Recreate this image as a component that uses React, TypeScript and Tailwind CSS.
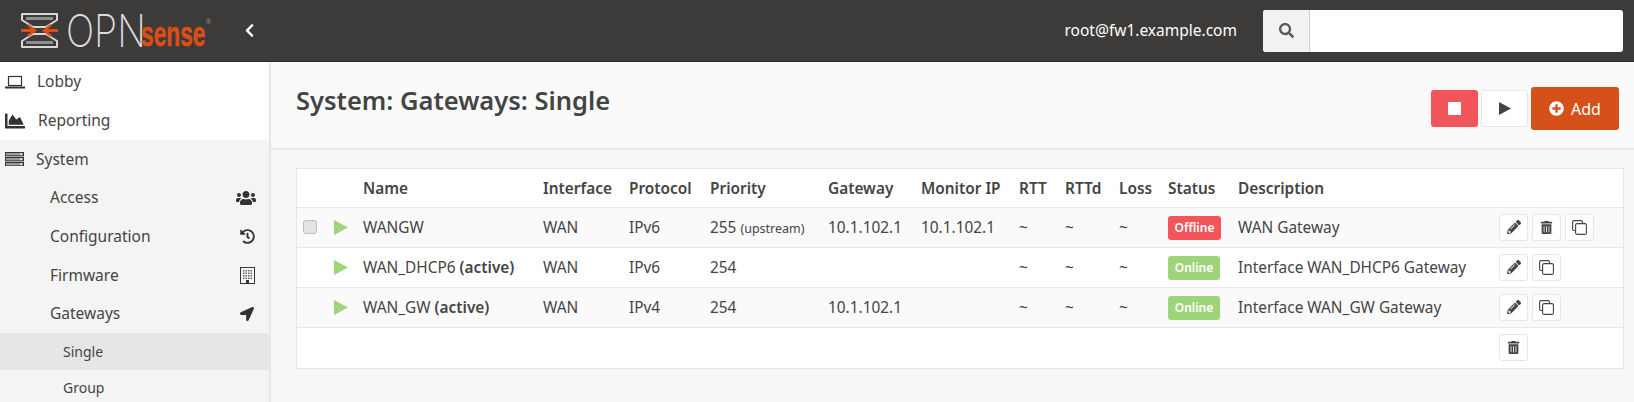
import React from 'react';
import {
  FaChartArea,
  FaChevronLeft,
  FaHistory,
  FaLocationArrow,
  FaPencilAlt,
  FaPlusCircle,
  FaSearch,
  FaTrashAlt,
  FaUsers,
} from 'react-icons/fa';

type Row = {
  name: string;
  active?: boolean;
  iface: string;
  proto: string;
  priority: string;
  upstream?: boolean;
  gateway: string;
  monitor: string;
  online: boolean;
  description: string;
  removable?: boolean;
  check?: boolean;
};

const rows: Row[] = [
  { name: 'WANGW', iface: 'WAN', proto: 'IPv6', priority: '255', upstream: true, gateway: '10.1.102.1', monitor: '10.1.102.1', online: false, description: 'WAN Gateway', removable: true, check: true },
  { name: 'WAN_DHCP6', active: true, iface: 'WAN', proto: 'IPv6', priority: '254', gateway: '', monitor: '', online: true, description: 'Interface WAN_DHCP6 Gateway' },
  { name: 'WAN_GW', active: true, iface: 'WAN', proto: 'IPv4', priority: '254', gateway: '10.1.102.1', monitor: '', online: true, description: 'Interface WAN_GW Gateway' },
];

const headers = ['', '', 'Name', 'Interface', 'Protocol', 'Priority', 'Gateway', 'Monitor IP', 'RTT', 'RTTd', 'Loss', 'Status', 'Description', ''];
const colWidths = ['w-[37px]', 'w-[29px]', 'w-[180px]', 'w-[86px]', 'w-[81px]', 'w-[118px]', 'w-[93px]', 'w-[98px]', 'w-[46px]', 'w-[54px]', 'w-[49px]', 'w-[70px]', 'w-[261px]', 'w-[124px]'];

// text cells sit a touch lower than the badges and buttons
const cell = 'pt-[2px] whitespace-nowrap';

function Triangle({ className }: { className: string }) {
  return (
    <svg viewBox="0 0 14 15" className={className} fill="currentColor">
      <path d="M0 0L14 7.5L0 15Z" />
    </svg>
  );
}

function CloneIcon() {
  return (
    <svg width="15" height="15" viewBox="0 0 15 15" fill="none" stroke="#444" strokeWidth="1.1">
      <path d="M3.5 10.5H2A1.5 1.5 0 0 1 .6 9V2A1.5 1.5 0 0 1 2 .6H9A1.5 1.5 0 0 1 10.5 2V3.5" />
      <rect x="3.6" y="3.6" width="10.8" height="10.8" rx="1.5" />
    </svg>
  );
}

function LaptopIcon() {
  return (
    <svg width="20" height="14" viewBox="0 0 20 14" fill="none" stroke="#333" className="shrink-0">
      <rect x="3.5" y="1.5" width="13" height="9" strokeWidth="1.2" />
      <path d="M0 12.5H20" strokeWidth="2" />
    </svg>
  );
}

function ServerIcon() {
  return (
    <svg width="19" height="14" viewBox="0 0 19 14" className="shrink-0">
      {[0, 5, 10].map(y => (
        <g key={y}>
          <rect x="0.5" y={y + 0.5} width="18" height="3.4" fill="#9a9a9a" stroke="#333" />
          <rect x="15" y={y + 1.5} width="2" height="1.4" fill="#eee" />
        </g>
      ))}
    </svg>
  );
}

function BuildingIcon() {
  return (
    <svg width="15" height="17" viewBox="0 0 15 17" className="shrink-0 mr-[1px]">
      <rect x="0.5" y="0.5" width="14" height="16" fill="#f8f8f8" stroke="#333" />
      {[3, 5.5, 8, 10.5].flatMap(y =>
        [3, 5.5, 8, 10.5].map(x => <rect key={`${x}-${y}`} x={x} y={y} width="1.5" height="1.5" fill="#666" />),
      )}
      <rect x="6" y="13" width="3" height="3.5" fill="#333" />
    </svg>
  );
}

function Logo() {
  return (
    <div className="flex items-center w-[210px] h-[62px] ml-[21px] shrink-0">
      <svg width="37" height="37" viewBox="0 0 37 37" fill="none" className="shrink-0">
        <path d="M1 8V2H36V8L25 15H12L1 8Z" stroke="#d8d8d8" strokeWidth="2" strokeLinejoin="round" />
        <path d="M1 29V35H36V29L25 22H12L1 29Z" stroke="#d8d8d8" strokeWidth="2" strokeLinejoin="round" />
        <path d="M5 6.5H32M5 30.5H32" stroke="#8f8f8f" strokeWidth="3" />
        <path d="M0 18.5H12M37 18.5H25" stroke="#d94f16" strokeWidth="3" />
        <path d="M7 13L14 18.5L7 24M30 13L23 18.5L30 24" stroke="#d94f16" strokeWidth="2.5" />
      </svg>
      <span className="ml-[8px] w-[75px] text-[45px] leading-none font-extralight text-[#dcdcdc] font-['Inter',sans-serif] origin-left scale-x-[0.83]">OPN</span>
      <span className="mt-[6px] w-[65px] text-[35px] leading-none font-bold text-[#d94f16] [-webkit-text-stroke:0.6px_#d94f16] font-['Liberation_Sans',sans-serif] origin-left scale-x-[0.65] whitespace-nowrap">sense</span>
      <span className="mb-[18px] text-[7px] leading-none text-[#9a9a9a] font-['Liberation_Sans',sans-serif]">®</span>
    </div>
  );
}

function Header() {
  return (
    <header className="h-[62px] shrink-0 bg-[#3c3b39] flex items-center border-b border-[#2e2d2b]">
      <Logo />
      <FaChevronLeft className="ml-[11px] text-white text-[15px]" />
      <span className="ml-auto text-white text-[15.5px]">root@fw1.example.com</span>
      <div className="ml-[26px] mr-[11px] w-[360px] h-[42px] flex rounded-[3px] overflow-hidden bg-white">
        <div className="w-[47px] bg-[#f2f2f2] border-r border-[#cfcfcf] flex items-center justify-center">
          <FaSearch className="text-[15px] text-[#5a5a5a]" />
        </div>
      </div>
    </header>
  );
}

function NavItem({ label, icon, bg, sub, h }: { label: string; icon?: React.ReactNode; bg?: string; sub?: boolean; h: string }) {
  return (
    <div className={`flex items-center justify-between ${h} ${bg ?? ''} ${sub ? 'pl-[63px] text-[14px]' : 'pl-[50px] text-[15.5px]'} pr-[13px] text-[#444]`}>
      <span className={sub ? '' : 'pt-[1px]'}>{label}</span>
      {icon}
    </div>
  );
}

function Sidebar() {
  return (
    <aside className="w-[271px] shrink-0 bg-[#f4f4f4] border-r-2 border-[#e6e6e6] text-[#444]">
      <div className="bg-white h-[78px]">
        <div className="h-[39px] flex items-center pl-[5px] text-[15.5px]">
          <LaptopIcon />
          <span className="ml-[12px] pt-[1px]">Lobby</span>
        </div>
        <div className="h-[39px] flex items-center pl-[5px] text-[15.5px]">
          <FaChartArea className="text-[20px] text-[#333]" />
          <span className="ml-[13px]">Reporting</span>
        </div>
      </div>
      <div className="h-[38px] flex items-center pl-[5px] text-[15.5px]">
        <ServerIcon />
        <span className="ml-[12px] pt-[1px]">System</span>
      </div>
      <NavItem h="h-[39px]" label="Access" icon={<FaUsers className="text-[20px] text-[#333]" />} />
      <NavItem h="h-[39px]" label="Configuration" icon={<FaHistory className="text-[15px] mr-[1px] text-[#333]" />} />
      <NavItem h="h-[38px]" label="Firmware" icon={<BuildingIcon />} />
      <NavItem h="h-[39px]" label="Gateways" icon={<FaLocationArrow className="text-[14px] mr-[2px] text-[#333]" />} />
      <NavItem h="h-[37px]" sub bg="bg-[#e6e6e6]" label="Single" />
      <NavItem h="h-[34px]" sub label="Group" />
    </aside>
  );
}

function ActionButton({ children }: { children: React.ReactNode }) {
  return (
    <button className="w-[29px] h-[27px] flex items-center justify-center bg-white border border-[#e6e6e6] rounded-[3px] text-[#444] text-[13px]">
      {children}
    </button>
  );
}

function StatusBadge({ online }: { online: boolean }) {
  return (
    <span className={`inline-flex items-center justify-center h-[24px] rounded-[3px] text-white text-[12px] font-semibold ${online ? 'w-[52px] bg-[#9fd57a]' : 'w-[53px] bg-[#f2555a]'}`}>
      {online ? 'Online' : 'Offline'}
    </span>
  );
}

function GatewayTable() {
  return (
    <div className="mt-[18px] ml-[25px] mr-[10px] bg-white border border-[#e6e6e6]">
      <table className="w-full table-fixed border-collapse text-[15.4px] text-[#444]">
        <colgroup>
          {colWidths.map((w, i) => (
            <col key={i} className={w} />
          ))}
        </colgroup>
        <thead>
          <tr className="h-[38px]">
            {headers.map((h, i) => (
              <th key={i} className={`text-left font-semibold ${cell}`}>{h}</th>
            ))}
          </tr>
        </thead>
        <tbody>
          {rows.map(r => (
            <tr key={r.name} className="h-[40px] border-t border-[#e8e8e8] even:bg-white odd:bg-[#fafafa]">
              <td>
                {r.check && <div className="ml-[6px] w-[14px] h-[14px] rounded-[3px] border border-[#bbb] bg-[#e4e4e4]" />}
              </td>
              <td>
                <Triangle className="w-[14px] h-[15px] text-[#9fd57a]" />
              </td>
              <td className={cell}>
                {r.name} {r.active && <b className="font-semibold">(active)</b>}
              </td>
              <td className={cell}>{r.iface}</td>
              <td className={cell}>{r.proto}</td>
              <td className={cell}>
                {r.priority} {r.upstream && <small className="text-[12.5px]">(upstream)</small>}
              </td>
              <td className={cell}>{r.gateway}</td>
              <td className={cell}>{r.monitor}</td>
              <td className={cell}>~</td>
              <td className={cell}>~</td>
              <td className={cell}>~</td>
              <td><StatusBadge online={r.online} /></td>
              <td className={cell}>{r.description}</td>
              <td>
                <div className="flex gap-[4px]">
                  <ActionButton><FaPencilAlt className="text-[14px]" /></ActionButton>
                  {r.removable && <ActionButton><FaTrashAlt /></ActionButton>}
                  <ActionButton><CloneIcon /></ActionButton>
                </div>
              </td>
            </tr>
          ))}
          <tr className="h-[41px] border-t border-[#e8e8e8]">
            <td colSpan={13} />
            <td>
              <ActionButton><FaTrashAlt /></ActionButton>
            </td>
          </tr>
        </tbody>
      </table>
    </div>
  );
}

export default function App() {
  return (
    <div className="w-[1634px] h-[402px] overflow-hidden flex flex-col bg-[#f7f7f7] font-['Noto_Sans',sans-serif]">
      <Header />
      <div className="flex flex-1 min-h-0">
        <Sidebar />
        <main className="flex-1 min-w-0">
          <div className="h-[88px] bg-[#fafafa] border-b-2 border-[#e9e9e9] flex justify-between pl-[25px] pr-[15px]">
            <h1 className="mt-[19px] text-[25.5px] leading-[38px] font-semibold text-[#444]">System: Gateways: Single</h1>
            <div className="mt-[25px] flex items-start gap-[3px]">
              <button className="mt-[3px] w-[47px] h-[37px] rounded-[3px] bg-[#f2555a] flex items-center justify-center">
                <span className="w-[13px] h-[13px] bg-white" />
              </button>
              <button className="mt-[3px] w-[47px] h-[37px] rounded-[3px] bg-white border border-[#e6e6e6] flex items-center justify-center">
                <Triangle className="w-[12px] h-[13px] text-[#444]" />
              </button>
              <button className="w-[88px] h-[43px] rounded-[3px] bg-[#d6511a] flex items-center justify-center gap-[7px] text-white text-[16px]">
                <FaPlusCircle className="text-[15px]" />Add
              </button>
            </div>
          </div>
          <GatewayTable />
        </main>
      </div>
    </div>
  );
}
